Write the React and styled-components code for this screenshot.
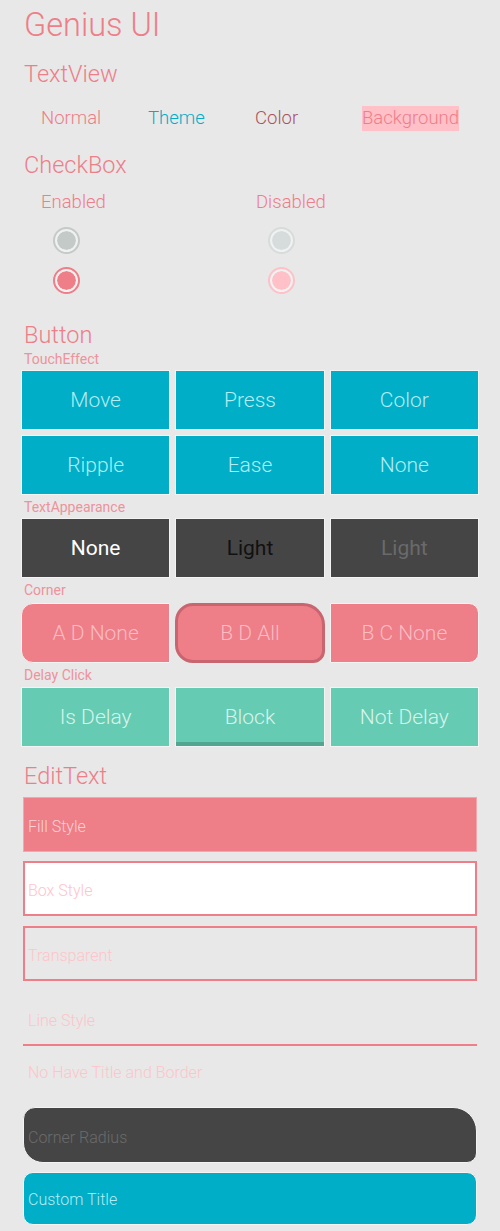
import styled, { createGlobalStyle } from "styled-components";

const PINK = "#ee7e88";
const TEAL = "#00aec8";
const GREEN = "#66cbb3";
const DARK = "#454545";

const GlobalStyle = createGlobalStyle`
  html, body {
    margin: 0;
    padding: 0;
    background: #e8e8e8;
  }
  body {
    font-family: Roboto, "Liberation Sans", sans-serif;
  }
`;

const Page = styled.div`
  width: 500px;
  min-height: 1231px;
  box-sizing: border-box;
  padding-top: 7px;
  background: #e8e8e8;
  display: flex;
  flex-direction: column;
`;

const AppTitle = styled.h1`
  margin: 0;
  padding-left: 24px;
  font-size: 32.5px;
  line-height: 37px;
  font-weight: 300;
  color: ${PINK};
`;

const SectionTitle = styled.h2`
  margin: ${(p) => p.$top}px 0 0;
  padding-left: 24px;
  font-size: 23.5px;
  line-height: 26px;
  font-weight: 300;
  color: ${PINK};
`;

const SmallLabel = styled.div`
  margin-top: ${(p) => p.$top}px;
  padding-left: 24px;
  font-size: 14px;
  line-height: 16px;
  color: ${PINK};
  opacity: 0.8;
`;

const TextRow = styled.div`
  margin-top: 19px;
  padding-left: 41px;
  display: grid;
  grid-template-columns: repeat(4, 107px);
  font-size: 18.5px;
  font-weight: 300;
  line-height: 25px;
`;

const Sample = styled.span`
  justify-self: start;
  color: ${(p) => p.$color};
  background: ${(p) => p.$bg || "transparent"};
`;

const CheckGrid = styled.div`
  margin-top: 12px;
  padding-left: 41px;
  display: grid;
  grid-template-columns: 215px 215px;
`;

const CheckColumn = styled.div`
  display: flex;
  flex-direction: column;
`;

const CheckLabel = styled.div`
  font-size: 18.5px;
  font-weight: 300;
  line-height: 25px;
  color: ${PINK};
  margin-bottom: 5px;
`;

const RadioRow = styled.div`
  height: 40px;
  display: flex;
  align-items: center;
  padding-left: 12px;
`;

const Radio = styled.div`
  width: 27px;
  height: 27px;
  box-sizing: border-box;
  border-radius: 50%;
  border: 2.5px solid ${(p) => p.$color};
  padding: 2px;
  background: ${(p) => p.$color};
  background-clip: content-box;
  box-shadow: inset 0 0 0 2px #f1f1f1;
`;

const ButtonGrid = styled.div`
  margin-top: ${(p) => p.$top}px;
  padding-left: 21px;
  width: 458px;
  display: grid;
  grid-template-columns: repeat(3, 1fr);
  grid-auto-rows: 60px;
  gap: 5px;
`;

const Button = styled.button`
  position: relative;
  box-sizing: border-box;
  margin: 0;
  padding: 0;
  border: ${(p) => (p.$ring ? `3px solid ${p.$ring}` : "1px solid #f3f3f3")};
  border-radius: ${(p) => p.$radius || "0"};
  background: ${(p) => p.$bg};
  color: ${(p) => p.$color};
  font-family: Roboto, "Liberation Sans", sans-serif;
  font-size: 21px;
  font-weight: ${(p) => p.$weight || 300};
  display: flex;
  align-items: center;
  justify-content: center;
  overflow: hidden;
`;

const BlockBar = styled.span`
  position: absolute;
  left: 0;
  right: 0;
  bottom: 0;
  height: 4px;
  background: #52a591;
`;

const FieldList = styled.div`
  margin-top: 8px;
  padding-left: 23px;
  width: 454px;
  display: flex;
  flex-direction: column;
`;

const Field = styled.div`
  box-sizing: border-box;
  margin-top: ${(p) => p.$top || 0}px;
  height: ${(p) => p.$height || 55}px;
  padding: ${(p) => p.$pad || 20}px 0 0 ${(p) => p.$left ?? 4}px;
  background: ${(p) => p.$bg || "transparent"};
  border: ${(p) => p.$border || "none"};
  border-radius: ${(p) => p.$radius || "0"};
  font-size: 16px;
  font-weight: 300;
  line-height: 20px;
  color: ${(p) => p.$color};
`;

const LineField = styled(Field)`
  border: none;
  border-bottom: 2px solid ${PINK};
`;

const PlainText = styled.div`
  margin-top: 17px;
  padding-left: 5px;
  font-size: 16px;
  font-weight: 300;
  line-height: 20px;
  color: #ffc4ca;
`;

export default function App() {
  return (
    <>
      <GlobalStyle />
      <Page>
        <AppTitle>Genius UI</AppTitle>

        <SectionTitle $top={17}>TextView</SectionTitle>
        <TextRow>
          <Sample $color={PINK}>Normal</Sample>
          <Sample $color="#00aec8">Theme</Sample>
          <Sample $color="#a9535c">Color</Sample>
          <Sample $color={PINK} $bg="#ffc0c8">Background</Sample>
        </TextRow>

        <SectionTitle $top={21}>CheckBox</SectionTitle>
        <CheckGrid>
          <CheckColumn>
            <CheckLabel>Enabled</CheckLabel>
            <RadioRow>
              <Radio $color="#c3cac8" />
            </RadioRow>
            <RadioRow>
              <Radio $color={PINK} />
            </RadioRow>
          </CheckColumn>
          <CheckColumn>
            <CheckLabel>Disabled</CheckLabel>
            <RadioRow>
              <Radio $color="#d6dcdb" />
            </RadioRow>
            <RadioRow>
              <Radio $color="#ffc0c8" />
            </RadioRow>
          </CheckColumn>
        </CheckGrid>

        <SectionTitle $top={22}>Button</SectionTitle>
        <SmallLabel $top={3}>TouchEffect</SmallLabel>
        <ButtonGrid $top={3}>
          {["Move", "Press", "Color", "Ripple", "Ease", "None"].map((t) => (
            <Button key={t} $bg={TEAL} $color="#b3ecf3">
              {t}
            </Button>
          ))}
        </ButtonGrid>

        <SmallLabel $top={4}>TextAppearance</SmallLabel>
        <ButtonGrid $top={3}>
          <Button $bg={DARK} $color="#ffffff" $weight={400}>None</Button>
          <Button $bg={DARK} $color="#111111" $weight={400}>Light</Button>
          <Button $bg={DARK} $color="#6a6a6a" $weight={400}>Light</Button>
        </ButtonGrid>

        <SmallLabel $top={4}>Corner</SmallLabel>
        <ButtonGrid $top={5}>
          <Button $bg={PINK} $color="#fbbcc3" $radius="12px 0 0 12px">
            A D None
          </Button>
          <Button
            $bg={PINK}
            $color="#fbbcc3"
            $ring="#c9656f"
            $radius="18px 22px 12px 18px"
          >
            B D All
          </Button>
          <Button $bg={PINK} $color="#fbbcc3" $radius="0 10px 10px 0">
            B C None
          </Button>
        </ButtonGrid>

        <SmallLabel $top={4}>Delay Click</SmallLabel>
        <ButtonGrid $top={4}>
          <Button $bg={GREEN} $color="#d6f4ec">Is Delay</Button>
          <Button $bg={GREEN} $color="#d6f4ec">
            Block
            <BlockBar />
          </Button>
          <Button $bg={GREEN} $color="#d6f4ec">Not Delay</Button>
        </ButtonGrid>

        <SectionTitle $top={16}>EditText</SectionTitle>
        <FieldList>
          <Field $bg={PINK} $color="#fcd2d6" $border="1px solid #f0a8ae" $pad={19} $left={4}>
            Fill Style
          </Field>
          <Field
            $top={9}
            $bg="#ffffff"
            $color="#ffc4ca"
            $border={`2px solid ${PINK}`}
            $pad={18}
            $left={3}
          >
            Box Style
          </Field>
          <Field
            $top={10}
            $color="#ffc4ca"
            $border={`2px solid ${PINK}`}
            $pad={18}
            $left={3}
          >
            Transparent
          </Field>
          <LineField $top={10} $color="#ffc4ca" $left={5}>
            Line Style
          </LineField>
          <PlainText>No Have Title and Border</PlainText>
          <Field
            $top={24}
            $height={56}
            $bg={DARK}
            $color="#6b6b6b"
            $border="1px solid #f4f4f4"
            $radius="12px 24px 10px 20px"
            $pad={20}
            $left={4}
          >
            Corner Radius
          </Field>
          <Field
            $top={9}
            $height={53}
            $bg={TEAL}
            $color="#b3ecf3"
            $border="1px solid #f4f4f4"
            $radius="10px"
            $pad={17}
            $left={4}
          >
            Custom Title
          </Field>
        </FieldList>
      </Page>
    </>
  );
}
